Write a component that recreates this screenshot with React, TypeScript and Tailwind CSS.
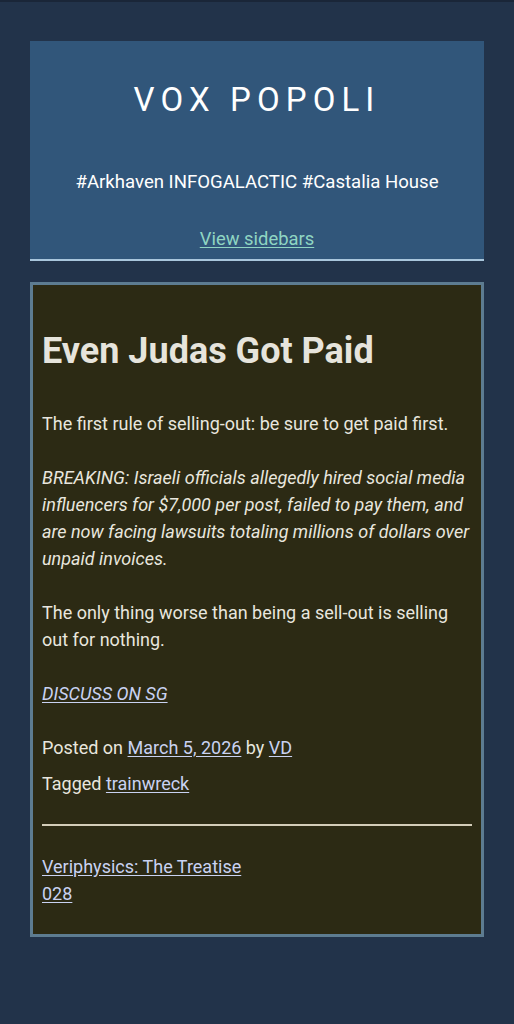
export default function App() {
  return (
    <div className="min-h-[1024px] bg-[#22334a] border-t-2 border-[#1a2638] px-[30px] pt-[39px] pb-10 font-['Roboto',sans-serif] text-[18px] leading-[27px] text-[#e8e6de]">
      <header className="bg-[#31567a] border-b-2 border-[#a9c6dc] text-center text-white pt-[39px] pb-[7px]">
        <h1 className="text-[33px] leading-[40px] font-normal tracking-[0.185em]">VOX POPOLI</h1>
        <p className="mt-[49px] text-[18.6px] leading-[27px]">#Arkhaven INFOGALACTIC #Castalia House</p>
        <a href="#" className="inline-block mt-[29px] text-[18.4px] text-[#8fd5c2] underline underline-offset-2">
          View sidebars
        </a>
      </header>

      <article className="mt-[21px] bg-[#2c2a14] border-[3px] border-[#5d7c91] px-[9px] pt-[44px] pb-[27px]">
        <h2 className="text-[36px] leading-[44px] font-bold text-[#e6e4dc]">Even Judas Got Paid</h2>
        <p className="mt-[37px]">The first rule of selling-out: be sure to get paid first.</p>
        <p className="mt-[27px] italic">
          BREAKING: Israeli officials allegedly hired social media influencers for $7,000 per post, failed to pay
          them, and are now facing lawsuits totaling millions of dollars over unpaid invoices.
        </p>
        <p className="mt-[27px]">The only thing worse than being a sell-out is selling out for nothing.</p>
        <p className="mt-[27px] italic">
          <a href="#" className="text-[#c9d2f2] underline underline-offset-2">DISCUSS ON SG</a>
        </p>

        <footer className="mt-[27px]">
          <div>
            Posted on{" "}
            <a href="#" className="text-[#c9d2f2] underline underline-offset-2">March 5, 2026</a> by{" "}
            <a href="#" className="text-[#c9d2f2] underline underline-offset-2">VD</a>
          </div>
          <div className="mt-[9px]">
            Tagged <a href="#" className="text-[#c9d2f2] underline underline-offset-2">trainwreck</a>
          </div>
        </footer>

        <hr className="mt-[27px] border-0 border-t-2 border-[#d3cdb9]" />

        <nav className="mt-[27px] flex flex-col items-start">
          <a href="#" className="text-[#c9d2f2] underline underline-offset-2">Veriphysics: The Treatise</a>
          <a href="#" className="text-[#c9d2f2] underline underline-offset-2">028</a>
        </nav>
      </article>
    </div>
  );
}
